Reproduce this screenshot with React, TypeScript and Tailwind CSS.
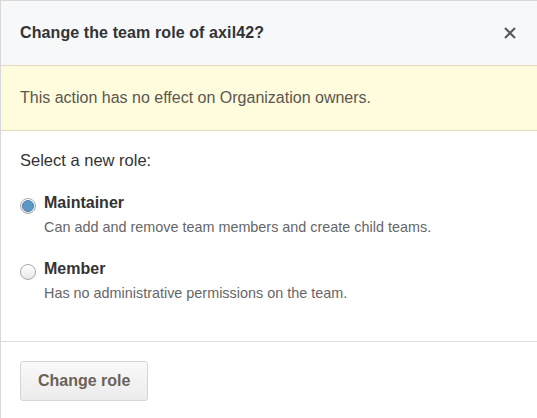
import { useState } from 'react';

/**
 * Change team role dialog
 */
export default function App() {
  const [role, setRole] = useState('maintainer');

  const roles = [
    { id: 'maintainer', label: 'Maintainer', description: 'Can add and remove team members and create child teams.' },
    { id: 'member', label: 'Member', description: 'Has no administrative permissions on the team.' },
  ];

  return (
    <div className="w-[537px] h-[418px] bg-white border-t border-l border-[#d8d8d8] font-['Liberation_Sans',Arial,sans-serif] text-[#333]">
      {/* Header */}
      <div className="h-[64px] bg-[#f6f8fa] flex items-center justify-between pl-[19px] pr-[19px]">
        <h3 className="text-[16px] font-bold text-[#333] tracking-[0.1px]">Change the team role of axil42?</h3>
        <button className="w-4 h-4 flex items-center justify-center">
          <svg width="14" height="14" viewBox="0 0 14 14" fill="none" stroke="#5a5a5a" strokeWidth="2.2">
            <path d="M2 2l10 10M12 2L2 12" />
          </svg>
        </button>
      </div>

      {/* Flash */}
      <div className="h-[66px] bg-[#fffbdd] border-y border-[#e0dcc0] flex items-center pl-[19px]">
        <p className="text-[16px] text-[#5a5750]">This action has no effect on Organization owners.</p>
      </div>

      {/* Body */}
      <div className="h-[211px] pl-[19px] pt-[19px] border-b border-[#dcdcdc]">
        <p className="text-[16.5px] text-[#333] leading-[20px]">Select a new role:</p>
        <div className="mt-[22px] flex flex-col gap-[21px]">
          {roles.map((r) => (
            <label key={r.id} className="flex items-start gap-[8px] cursor-pointer">
              <span className="mt-[6px] w-[16px] h-[16px] rounded-full border border-[#aaa] bg-[linear-gradient(#fff,#e8e8e8)] flex items-center justify-center shrink-0">
                {role === r.id && <span className="w-[12px] h-[12px] rounded-full bg-[#5c96c5] border border-[#4a84b6]" />}
              </span>
              <input type="radio" name="role" className="hidden" checked={role === r.id} onChange={() => setRole(r.id)} />
              <span className="flex flex-col">
                <span className="text-[16px] font-bold text-[#333] leading-[22px]">{r.label}</span>
                <span className="text-[14.4px] text-[#666] leading-[20px] mt-[3px]">{r.description}</span>
              </span>
            </label>
          ))}
        </div>
      </div>

      {/* Footer */}
      <div className="pl-[19px] pt-[19px]">
        <button className="h-[40px] px-[17px] rounded-[3px] border border-[#d5d5d5] bg-[linear-gradient(#f9f9f9,#ececec)] text-[16px] font-bold text-[#6a6258]">
          Change role
        </button>
      </div>
    </div>
  );
}
